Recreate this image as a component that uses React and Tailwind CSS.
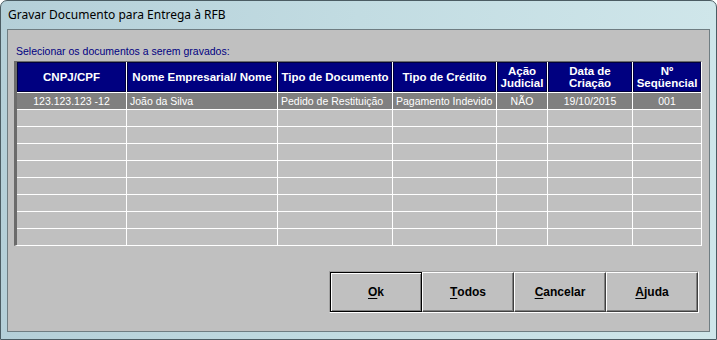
import React from "react";

// header titles, broken where the reference wraps them
const headers = [
  ["CNPJ/CPF"],
  ["Nome Empresarial/ Nome"],
  ["Tipo de Documento"],
  ["Tipo de Crédito"],
  ["Ação", "Judicial"],
  ["Data de", "Criação"],
  ["Nº", "Seqüencial"],
];

const align = ["center", "left", "left", "left", "center", "center", "center"];

const rows = [
  ["123.123.123 -12", "João da Silva", "Pedido de Restituição", "Pagamento Indevido", "NÃO", "19/10/2015", "001"],
  [], [], [], [], [], [], [], [],
];

const buttons = [
  { label: "Ok", isDefault: true },
  { label: "Todos" },
  { label: "Cancelar" },
  { label: "Ajuda" },
];

const Cell = ({ value, side, filled }) => (
  <div
    className={`${filled ? "bg-[#808080] text-white" : "bg-[#c0c0c0]"} h-[16px] leading-[16px] text-[10.5px] whitespace-nowrap overflow-hidden ${
      side === "left" ? "text-left pl-[3px]" : "text-center"
    }`}
  >
    {value}
  </div>
);

const WinButton = ({ label, isDefault }) => (
  <button
    type="button"
    className={`w-[92px] h-[40px] bg-[#c0c0c0] text-[12px] font-bold text-black flex items-center justify-center ${
      isDefault
        ? "border border-black shadow-[inset_1px_1px_#ffffff,inset_-1px_-1px_#808080]"
        : "border border-t-white border-l-white border-r-[#404040] border-b-[#404040] shadow-[inset_-1px_-1px_#808080]"
    }`}
  >
    <span className="underline underline-offset-2">{label[0]}</span>
    <span>{label.slice(1)}</span>
  </button>
);

export default function App() {
  return (
    <div className="w-[717px] h-[340px] bg-white font-['Liberation_Sans',Arial,sans-serif]">
      <div className="w-full h-full flex flex-col rounded-t-[7px] border border-[#4b5c63] bg-gradient-to-r from-[#b4cfd8] via-[#c2dce2] to-[#cfe6ea]">
        {/* title bar */}
        <div className="h-[28px] pl-[7px] flex items-center text-[12px] text-black font-['Noto_Sans',sans-serif]">
          Gravar Documento para Entrega à RFB
        </div>

        <div className="flex-1 px-[6px] pb-[7px] flex">
          <div className="flex-1 flex flex-col border border-[#6f7d82] bg-[#c0c0c0]">
            <div className="mt-[15px] pl-[8px] h-[13px] leading-[13px] text-[10.5px] text-[#000080]">
              Selecionar os documentos a serem gravados:
            </div>

            {/* documents grid */}
            <div className="mt-[3px] ml-[6px] w-[688px] border-l-[3px] border-t border-l-[#6b6b6b] border-t-[#6b6b6b] border-r border-b border-r-white border-b-white">
              <div className="grid grid-cols-[109px_150px_114px_103px_50px_84px_68px] grid-rows-[30px_repeat(9,16px)] gap-px bg-white">
                {headers.map((lines, i) => (
                  <div
                    key={i}
                    className="bg-[#000080] border border-[#00003c] flex flex-col items-center justify-center text-white font-bold text-[11.5px] leading-[12px] text-center whitespace-nowrap"
                  >
                    {lines.map((l) => (
                      <span key={l}>{l}</span>
                    ))}
                  </div>
                ))}
                {rows.map((row, r) =>
                  align.map((side, c) => (
                    <Cell key={`${r}-${c}`} value={row[c]} side={side} filled={r === 0} />
                  ))
                )}
              </div>
            </div>

            {/* buttons */}
            <div className="mt-[25px] ml-auto mr-[10px] flex border-t border-l border-t-[#a0a0a0] border-l-[#a0a0a0] border-r border-b border-r-white border-b-white">
              {buttons.map((b) => (
                <WinButton key={b.label} {...b} />
              ))}
            </div>
          </div>
        </div>
      </div>
    </div>
  );
}
